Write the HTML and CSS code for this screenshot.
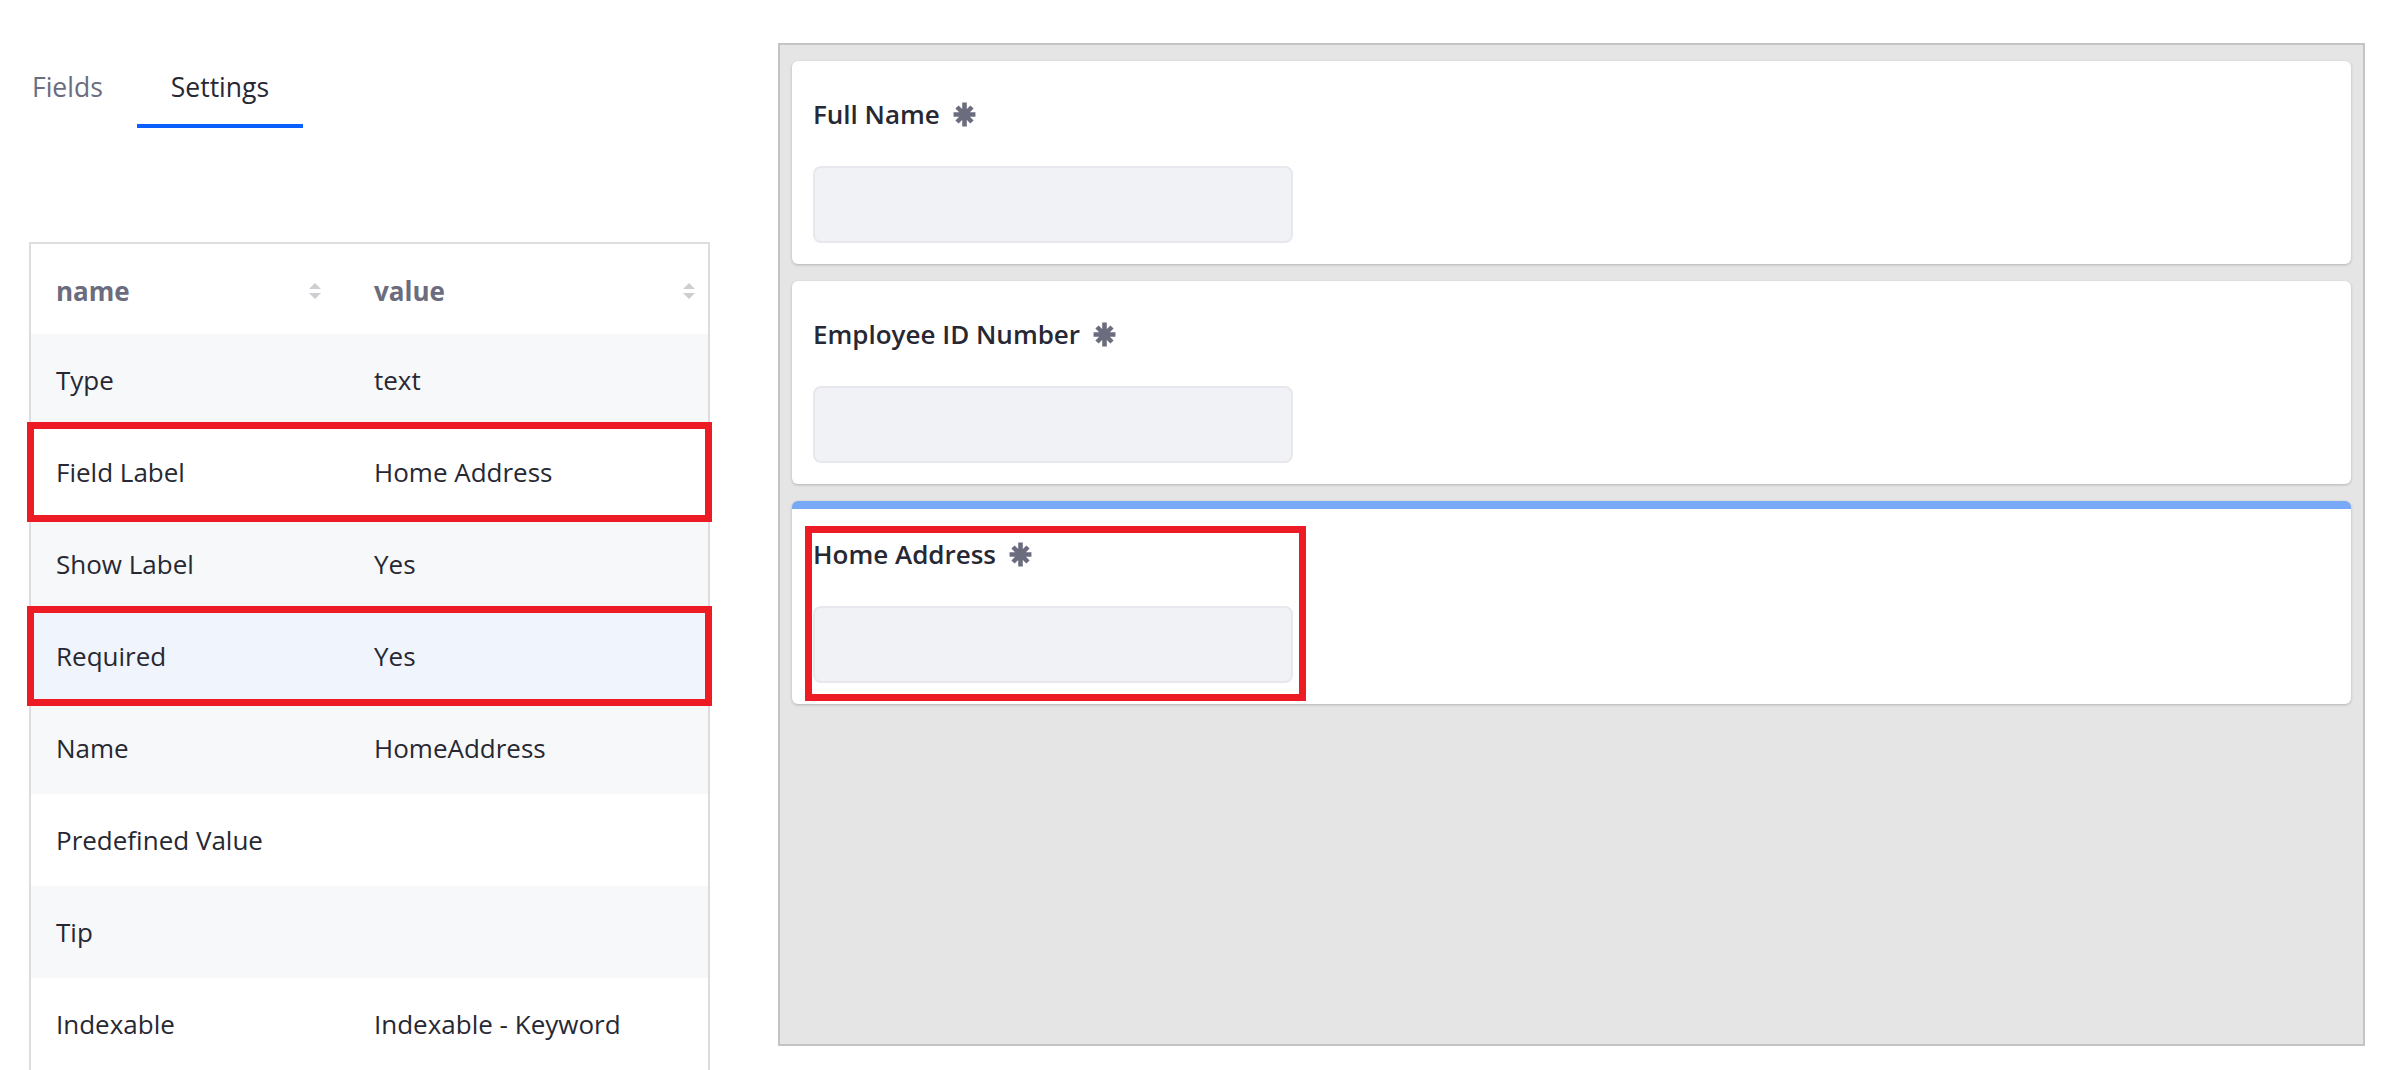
FILE: index.html
```html
<!DOCTYPE html>
<html lang="en">
<head>
<meta charset="utf-8">
<title>Form builder settings</title>
<link rel="stylesheet" href="styles.css">
</head>
<body>
<div class="page">
  <aside class="sidebar">
    <nav class="tabs">
      <span class="tab">Fields</span>
      <span class="tab active">Settings</span>
    </nav>
    <div class="table">
      <div class="row head">
        <div class="cell">name<span class="sort"><i class="up"></i><i class="down"></i></span></div>
        <div class="cell">value<span class="sort"><i class="up"></i><i class="down"></i></span></div>
      </div>
      <div class="row odd"><div class="cell">Type</div><div class="cell">text</div></div>
      <div class="row marked"><div class="cell">Field Label</div><div class="cell">Home Address</div></div>
      <div class="row odd"><div class="cell">Show Label</div><div class="cell">Yes</div></div>
      <div class="row hover marked"><div class="cell">Required</div><div class="cell">Yes</div></div>
      <div class="row odd"><div class="cell">Name</div><div class="cell">HomeAddress</div></div>
      <div class="row"><div class="cell">Predefined Value</div><div class="cell"></div></div>
      <div class="row odd"><div class="cell">Tip</div><div class="cell"></div></div>
      <div class="row"><div class="cell">Indexable</div><div class="cell">Indexable - Keyword</div></div>
    </div>
  </aside>
  <main class="canvas">
    <section class="card">
      <div class="label">Full Name <svg class="req" viewBox="0 0 24 24"><path d="M12 0.5v23M1.5 12h21M4.8 4.8l14.4 14.4M19.2 4.8L4.8 19.2"/></svg></div>
      <div class="input"></div>
    </section>
    <section class="card">
      <div class="label">Employee ID Number <svg class="req" viewBox="0 0 24 24"><path d="M12 0.5v23M1.5 12h21M4.8 4.8l14.4 14.4M19.2 4.8L4.8 19.2"/></svg></div>
      <div class="input"></div>
    </section>
    <section class="card selected">
      <div class="highlight">
        <div class="label">Home Address <svg class="req" viewBox="0 0 24 24"><path d="M12 0.5v23M1.5 12h21M4.8 4.8l14.4 14.4M19.2 4.8L4.8 19.2"/></svg></div>
        <div class="input"></div>
      </div>
    </section>
  </main>
</div>
</body>
</html>
```
FILE: styles.css
```css
html, body {
  margin: 0;
  padding: 0;
  background: #ffffff;
}
body {
  font-family: "Open Sans", "Noto Sans", sans-serif;
  color: #272833;
  width: 2383px;
  height: 1070px;
  overflow: hidden;
}
.page {
  display: flex;
  align-items: flex-start;
}
.sidebar {
  width: 720px;
  flex: none;
}
.tabs {
  display: flex;
  align-items: flex-end;
  height: 128px;
  margin-left: -2px;
}
.tab {
  font-size: 26.5px;
  line-height: 36px;
  padding: 0 34px 19px;
  border-bottom: 4px solid transparent;
  color: #6b6c7e;
}
.tab.active {
  color: #272833;
  border-bottom-color: #0b5fff;
}
.table {
  margin: 114px 0 0 29px;
  width: 681px;
  border: 2px solid #dddde0;
  border-bottom: none;
  box-sizing: border-box;
}
.row {
  display: grid;
  grid-template-columns: 305px 1fr;
  height: 92px;
  align-items: center;
  background: #ffffff;
  font-size: 26px;
}
.row.head {
  height: 90px;
  padding-top: 3px;
  box-sizing: border-box;
  font-weight: 700;
  color: #6b6c7e;
}
.row.odd {
  background: #f7f8f9;
}
.row.hover {
  background: #f0f5fd;
}
.row.marked {
  outline: 7px solid #ed1c24;
  outline-offset: -3px;
  position: relative;
  z-index: 1;
}
.cell {
  display: flex;
  align-items: center;
  justify-content: space-between;
  padding: 0 14px 0 25px;
}
.cell + .cell {
  padding: 0 12px 0 38px;
}
.sort {
  display: flex;
  flex-direction: column;
  gap: 4px;
  width: 13px;
}
.sort i {
  width: 0;
  height: 0;
  border-left: 6.5px solid transparent;
  border-right: 6.5px solid transparent;
}
.sort .up {
  border-bottom: 6px solid #cdcdd2;
}
.sort .down {
  border-top: 6px solid #cdcdd2;
}
.canvas {
  margin: 43px 0 0 58px;
  width: 1587px;
  height: 1003px;
  box-sizing: border-box;
  background: #e5e5e5;
  border: 2px solid #c4c4c4;
  padding: 16px 12px;
  display: flex;
  flex-direction: column;
  gap: 17px;
}
.card {
  background: #ffffff;
  border-radius: 6px;
  box-shadow: 0 1px 3px rgba(0, 0, 0, 0.22);
  padding: 37px 21px 21px;
  height: 203px;
  box-sizing: border-box;
}
.card.selected {
  border-top: 8px solid #78a9f7;
  padding-top: 20px;
}
.highlight {
  position: relative;
}
.highlight::after {
  content: "";
  position: absolute;
  left: -8px;
  top: -3px;
  width: 501px;
  height: 175px;
  border: 7px solid #ed1c24;
  box-sizing: border-box;
}
.card.selected .label {
  padding-top: 9px;
}
.label {
  display: flex;
  align-items: center;
  gap: 12px;
  font-size: 26px;
  font-weight: 600;
  line-height: 32px;
  margin-bottom: 36px;
}
.req {
  width: 25px;
  height: 25px;
  stroke: #6b6c7e;
  stroke-width: 4.4;
  stroke-linecap: butt;
  fill: none;
}
.input {
  width: 480px;
  height: 77px;
  box-sizing: border-box;
  background: #f1f2f5;
  border: 2px solid #e7e7ed;
  border-radius: 8px;
}
```
